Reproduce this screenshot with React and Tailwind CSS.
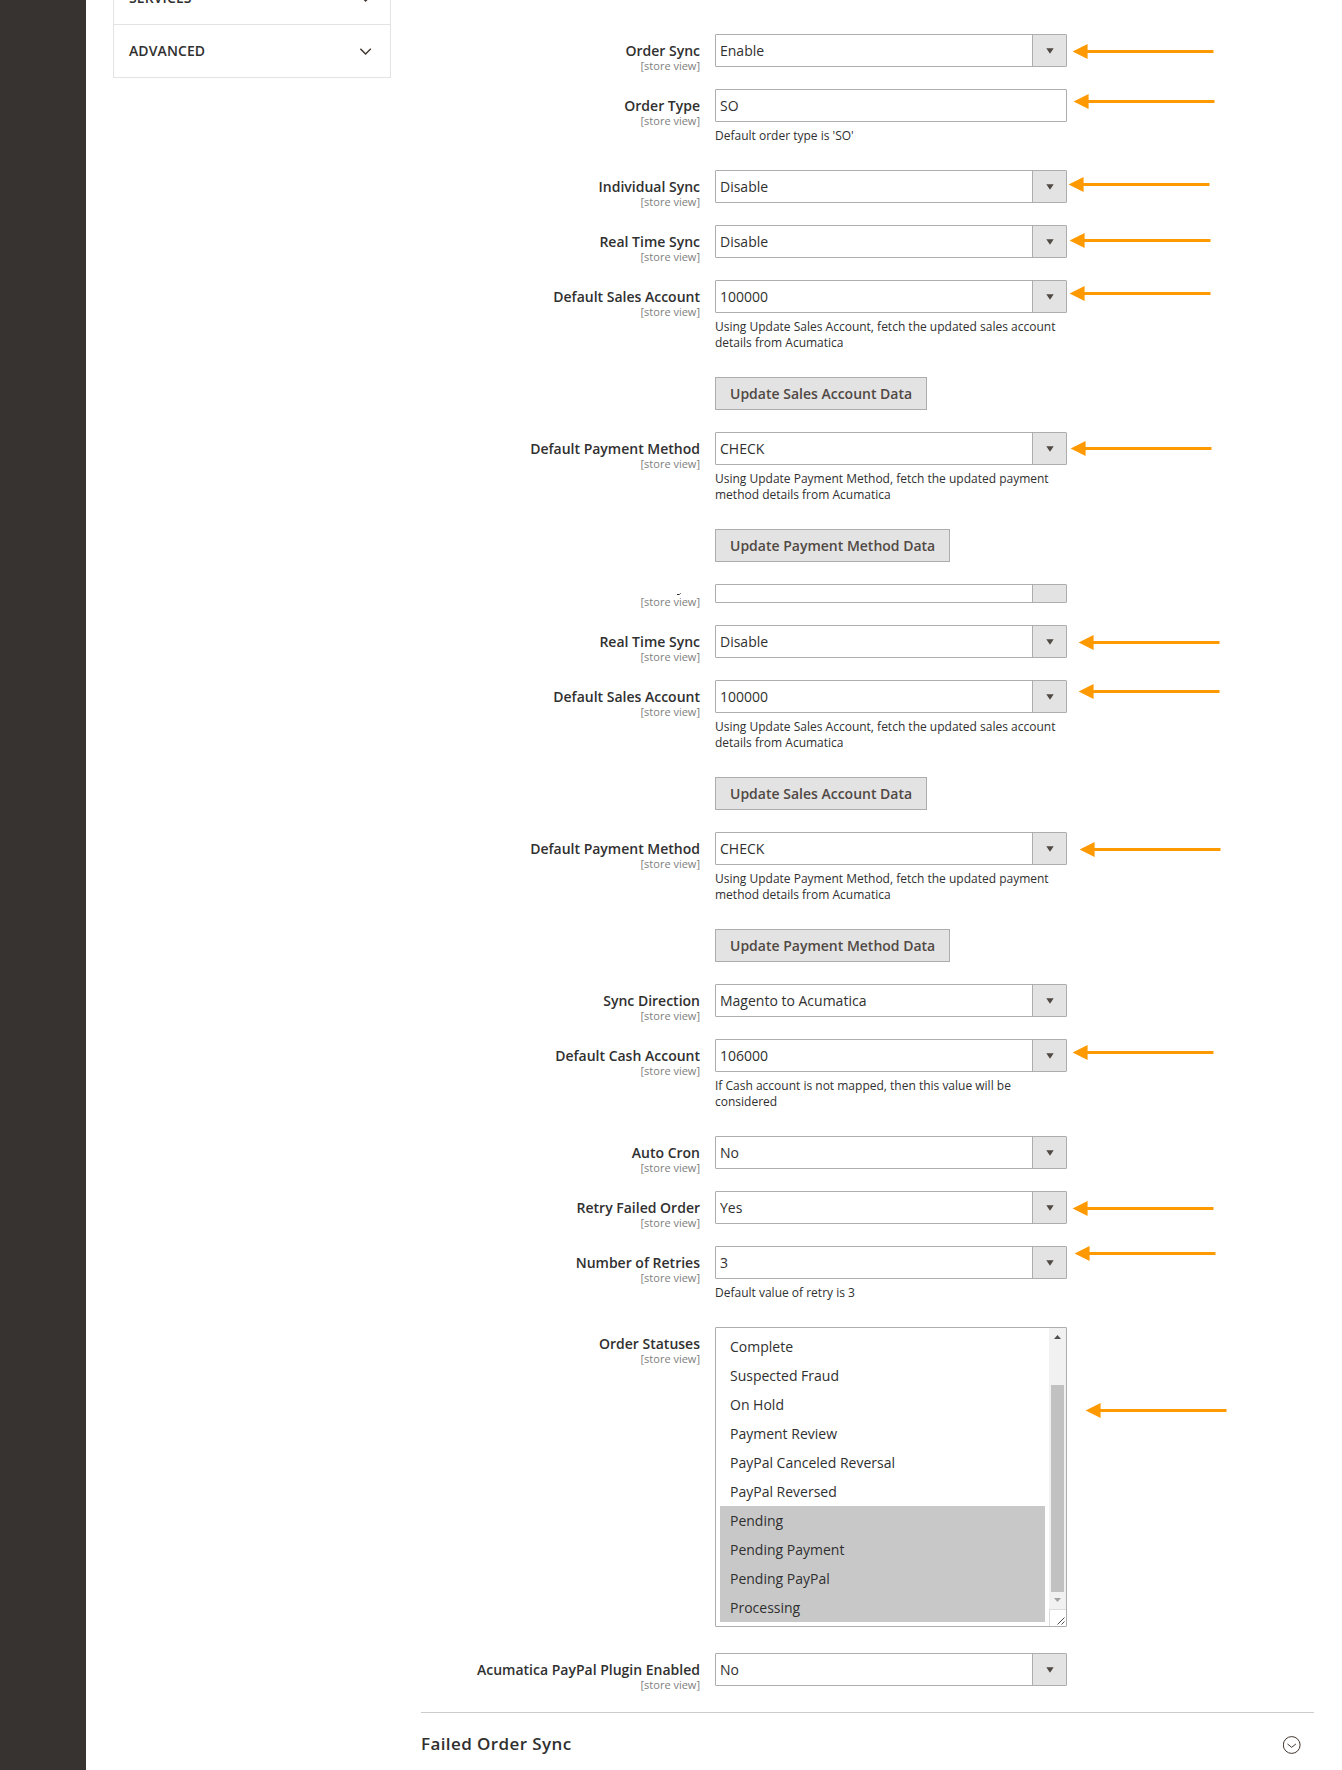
import React from "react";

const FONT = "font-['Open_Sans','Noto_Sans',sans-serif]";

function Arrow({ x, y }) {
  return (
    <svg className="pointer-events-none absolute" style={{ left: x, top: y }} width="142" height="15" viewBox="0 0 142 15">
      <path d="M0.6 7.5 L15.6 0 V6 H141.5 V9 H15.6 V15 Z" fill="#ff9900" />
    </svg>
  );
}

function Row({ label, children, arrow }) {
  return (
    <div className="relative flex">
      <div className="h-[33px] w-[279px] pt-[7px] text-right">
        <div className="text-[14px] leading-[19px] font-semibold text-[#303030]">{label}</div>
        <div className="-mt-px text-[11px] leading-[14px] text-[#808080]">[store view]</div>
      </div>
      <div className="ml-[15px] w-[352px]">{children}</div>
      {arrow && <Arrow x={arrow[0]} y={arrow[1]} />}
    </div>
  );
}

function Select({ value }) {
  return (
    <div className="flex h-[33px] rounded-[1px] border border-[#adadad] bg-white">
      <div className="flex-1 pl-1 text-[14px] leading-[31px] text-[#303030]">{value}</div>
      <div className="flex w-[34px] items-center justify-center border-l border-[#adadad] bg-[#e3e3e3]">
        <svg width="8" height="6" viewBox="0 0 8 6" className="mt-px"><path d="M0.3 0.3H7.7L4 5.7Z" fill="#514943" /></svg>
      </div>
    </div>
  );
}

function Note({ children }) {
  return <p className="mt-[6px] mb-1 w-[352px] text-[12px] leading-4 text-[#303030]">{children}</p>;
}

function Action({ children }) {
  return (
    <div className="ml-[294px] flex">
      <button className="h-[33px] border border-[#adadad] bg-[#e3e3e3] px-[14px] text-[14px] leading-[31px] font-semibold text-[#514943]">{children}</button>
    </div>
  );
}

function SalesAndPayment({ salesArrow, paymentArrow }) {
  return (
    <>
      <Row label="Default Sales Account" arrow={salesArrow}>
        <Select value="100000" />
        <Note>Using Update Sales Account, fetch the updated sales account details from Acumatica</Note>
      </Row>
      <Action>Update Sales Account Data</Action>
      <Row label="Default Payment Method" arrow={paymentArrow}>
        <Select value="CHECK" />
        <Note>Using Update Payment Method, fetch the updated payment method details from Acumatica</Note>
      </Row>
      <Action>Update Payment Method Data</Action>
    </>
  );
}

const STATUSES = [
  ["Complete", false],
  ["Suspected Fraud", false],
  ["On Hold", false],
  ["Payment Review", false],
  ["PayPal Canceled Reversal", false],
  ["PayPal Reversed", false],
  ["Pending", true],
  ["Pending Payment", true],
  ["Pending PayPal", true],
  ["Processing", true],
];

function StatusList() {
  return (
    <div className="flex h-[300px] rounded-[1px] border border-[#adadad] bg-white">
      <div className="flex-1 pt-1 pr-1 pl-1">
        {STATUSES.map(([name, selected]) => (
          <div key={name} className={"h-[29px] pl-[10px] text-[14px] leading-[29px] text-[#303030] " + (selected ? "bg-[#c8c8c8]" : "")}>{name}</div>
        ))}
      </div>
      <div className="flex w-[17px] flex-col bg-[#f1f1f1]">
        <div className="flex h-[17px] items-center justify-center">
          <svg width="7" height="4" viewBox="0 0 7 4"><path d="M0 4L3.5 0L7 4Z" fill="#505050" /></svg>
        </div>
        <div className="mx-[2px] mt-10 h-[207px] bg-[#c1c1c1]" />
        <div className="flex h-[17px] items-center justify-center pb-px">
          <svg width="7" height="4" viewBox="0 0 7 4"><path d="M0 0L3.5 4L7 0Z" fill="#a3a3a3" /></svg>
        </div>
        <div className="flex h-[17px] items-end justify-end border-t border-l border-[#dcdcdc] bg-white">
          <svg width="8" height="8" viewBox="0 0 8 8" className="mr-px mb-px"><path d="M0.5 7.5L7.5 0.5M4.5 7.5L7.5 4.5" stroke="#505050" fill="none" /></svg>
        </div>
      </div>
    </div>
  );
}

function Chevron() {
  return (
    <svg width="12" height="7" viewBox="0 0 12 7"><path d="M0.4 0.8L5.6 5.9L10.8 0.8" fill="none" stroke="#41362f" strokeWidth="1.4" /></svg>
  );
}

function NavItem({ children }) {
  return (
    <div className="flex h-[53px] items-center justify-between border-t border-[#e3e3e3] pr-[18px] pl-[15px]">
      <span className="text-[14px] leading-[20px] font-semibold tracking-[0.1px] text-[#303030]">{children}</span>
      <Chevron />
    </div>
  );
}

export default function App() {
  return (
    <div className={"flex h-[1770px] w-[1342px] overflow-hidden bg-white " + FONT}>
      <div className="w-[86px] shrink-0 bg-[#373330]" />
      <nav className="-mt-[29px] ml-[27px] h-[107px] w-[278px] shrink-0 border-x border-b border-[#e3e3e3]">
        <NavItem>SERVICES</NavItem>
        <NavItem>ADVANCED</NavItem>
      </nav>
      <main className="ml-[30px] w-[893px] shrink-0 pt-[34px]">
        <div className="flex flex-col gap-[22px]">
          <Row label="Order Sync" arrow={[651, 10]}><Select value="Enable" /></Row>
          <Row label="Order Type" arrow={[652, 5]}>
            <div className="h-[33px] rounded-[1px] border border-[#adadad] pl-1 text-[14px] leading-[31px] text-[#303030]">SO</div>
            <Note>Default order type is 'SO'</Note>
          </Row>
          <Row label="Individual Sync" arrow={[647, 7]}><Select value="Disable" /></Row>
          <Row label="Real Time Sync" arrow={[648, 8]}><Select value="Disable" /></Row>
          <SalesAndPayment salesArrow={[648, 6]} paymentArrow={[649, 9]} />
          <div className="flex h-[19px]">
            <div className="w-[279px] text-right text-[11px] text-[#808080]">
              <div className="flex h-[11px] items-end justify-end pr-[19px]">
                <svg width="4" height="2" viewBox="0 0 4 2"><path d="M0 1.5H2.4L3.6 0.3" fill="none" stroke="#303030" /></svg>
              </div>
              <div className="leading-[14px]">[store view]</div>
            </div>
            <div className="ml-[15px] flex w-[352px] rounded-[1px] border border-[#adadad]">
              <div className="flex-1" />
              <div className="w-[34px] border-l border-[#adadad] bg-[#e3e3e3]" />
            </div>
          </div>
          <Row label="Real Time Sync" arrow={[657, 10]}><Select value="Disable" /></Row>
          <SalesAndPayment salesArrow={[657, 4]} paymentArrow={[658, 10]} />
          <Row label="Sync Direction"><Select value="Magento to Acumatica" /></Row>
          <Row label="Default Cash Account" arrow={[651, 6]}>
            <Select value="106000" />
            <Note>If Cash account is not mapped, then this value will be considered</Note>
          </Row>
          <Row label="Auto Cron"><Select value="No" /></Row>
          <Row label="Retry Failed Order" arrow={[651, 10]}><Select value="Yes" /></Row>
          <Row label="Number of Retries" arrow={[653, 0]}>
            <Select value="3" />
            <Note>Default value of retry is 3</Note>
          </Row>
          <Row label="Order Statuses" arrow={[664, 76]}><StatusList /></Row>
          <div className="mt-1"><Row label="Acumatica PayPal Plugin Enabled"><Select value="No" /></Row></div>
        </div>
        <div className="mt-[26px] flex items-start justify-between border-t border-[#cccccc] pt-[18px] pr-[13px]">
          <h2 className="text-[17px] leading-[26px] font-semibold tracking-[0.4px] text-[#303030]">Failed Order Sync</h2>
          <svg className="mt-[5px]" width="18" height="18" viewBox="0 0 18 18" fill="none" stroke="#41362f"><circle cx="8.7" cy="9" r="8.4" /><path d="M4.5 8L8.7 11.3L12.9 8" /></svg>
        </div>
      </main>
    </div>
  );
}
